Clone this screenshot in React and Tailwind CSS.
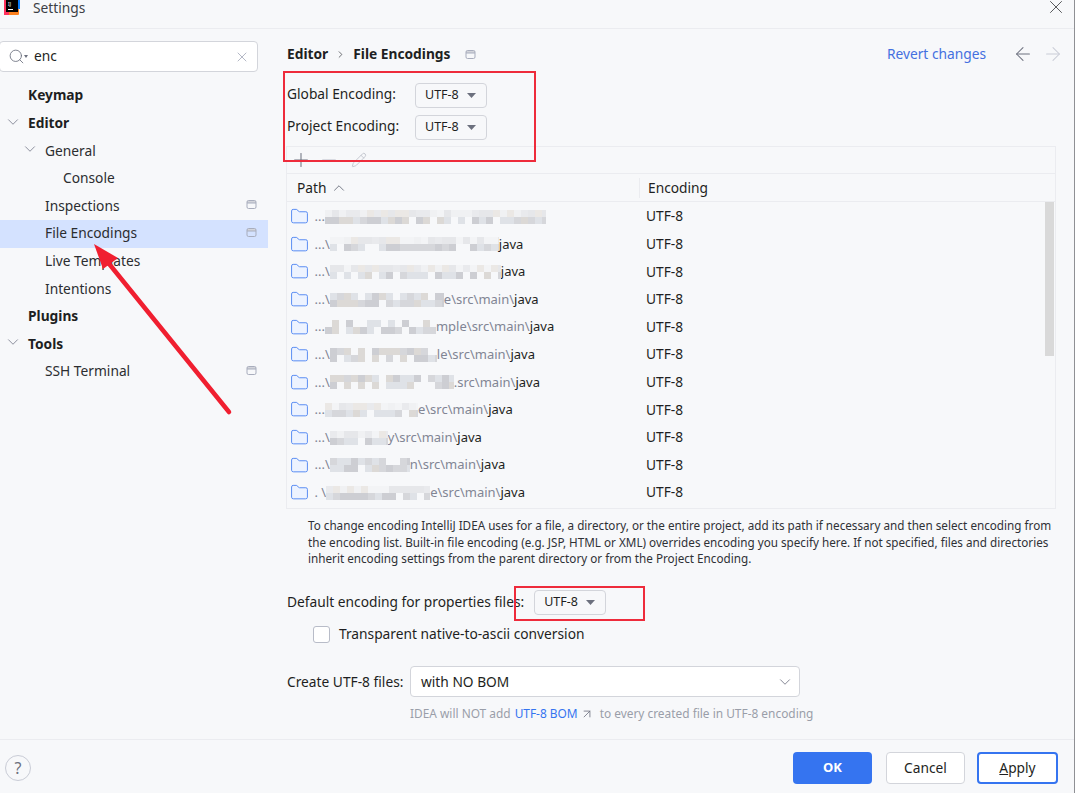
import React from "react";
import { ChevronDown, ChevronRight, ChevronUp, Search, X, Plus, Minus, Pencil, ArrowLeft, ArrowRight, ArrowUpRight, Folder } from "lucide-react";

const font = "font-['Noto_Sans','Liberation_Sans',sans-serif]";

const tree = [
  { label: "Keymap", bold: true, pad: "pl-[28px]" },
  { label: "Editor", bold: true, pad: "pl-[28px]", caret: "left-[3.5px]" },
  { label: "General", pad: "pl-[45px]", caret: "left-[21px]" },
  { label: "Console", pad: "pl-[63px]" },
  { label: "Inspections", pad: "pl-[45px]", tab: true },
  { label: "File Encodings", pad: "pl-[45px]", tab: true, selected: true },
  { label: "Live Templates", pad: "pl-[45px]" },
  { label: "Intentions", pad: "pl-[45px]" },
  { label: "Plugins", bold: true, pad: "pl-[28px]" },
  { label: "Tools", bold: true, pad: "pl-[28px]", caret: "left-[3.5px]" },
  { label: "SSH Terminal", pad: "pl-[45px]", tab: true },
];

const rows = [
  { lead: "...", blur: 221, seed: 3, tail: "" },
  { lead: "...\\", blur: 169, seed: 5, tail: "", end: true },
  { lead: "...\\", blur: 171, seed: 7, tail: "", end: true },
  { lead: "...\\", blur: 114, seed: 2, tail: "e\\src\\main\\", end: true },
  { lead: "...", blur: 111, seed: 4, tail: "mple\\src\\main\\", end: true },
  { lead: "...\\", blur: 107, seed: 6, tail: "le\\src\\main\\", end: true },
  { lead: "...\\", blur: 124, seed: 8, tail: ".src\\main\\", end: true },
  { lead: "...", blur: 93, seed: 9, tail: "e\\src\\main\\", end: true },
  { lead: "...\\", blur: 58, seed: 1, tail: "y\\src\\main\\", end: true },
  { lead: "...\\", blur: 80, seed: 10, tail: "n\\src\\main\\", end: true },
  { lead: ". \\", blur: 104, seed: 11, tail: "e\\src\\main\\", end: true },
];

const shades = ["#e6e7ea", "#d6d7db", "#f0f1f3", "#cdced3", "#ebe8e5", "#dfe2e7", "#f3f4f6", "#dcd9d6", "#e9eaed", "#f7f8fa"];

function TabIcon({ className = "" }) {
  return (
    <svg width="11" height="11" viewBox="0 0 11 11" fill="none" className={className}>
      <path d="M1 4V3a1.5 1.5 0 0 1 1.5-1.5h6A1.5 1.5 0 0 1 10 3v1z" fill="#d3d5db" />
      <rect x="1" y="1.5" width="9" height="8" rx="1.5" stroke="#a8adbd" strokeWidth="1" />
      <path d="M1 4h9" stroke="#a8adbd" strokeWidth="1" />
    </svg>
  );
}

function Mosaic({ width, seed }) {
  const cols = Math.ceil(width / 7);
  const cells = Array.from({ length: cols * 2 }, (_, i) => shades[(((i + 1) * (seed + 3) * 37) ^ (i * 13)) % shades.length]);
  return (
    <span className="inline-grid grid-rows-2 grid-flow-col h-[14px] overflow-hidden blur-[0.6px]" style={{ width }}>
      {cells.map((c, i) => (
        <span key={i} className="block w-[7px] h-[7px]" style={{ background: c }} />
      ))}
    </span>
  );
}

function Combo({ className = "" }) {
  return (
    <div className={`flex items-center w-[72px] h-[25px] bg-[#f7f8fa] border border-[#d3d5db] rounded-[4px] pl-[9px] text-[12.5px] text-[#1e1f22] ${className}`}>
      <span>UTF-8</span>
      <svg width="9" height="5" viewBox="0 0 9 5" className="ml-[8px]">
        <path d="M0 0h9L4.5 5z" fill="#6c707e" />
      </svg>
    </div>
  );
}

export default function App() {
  return (
    <div className={`relative w-[1080px] h-[793px] overflow-hidden bg-[#f7f8fa] flex flex-col text-[13.75px] text-[#1e1f22] ${font}`}>
      {/* title bar */}
      <div className="h-[29px] shrink-0 border-b border-[#ebecf0] flex items-start justify-between pr-[13px]">
        <div className="flex items-start">
          <svg width="20" height="16" viewBox="0 0 20 16">
            <rect x="4" y="0" width="15" height="15" rx="1" fill="#fc801d" />
            <rect x="4" y="0" width="5" height="15" fill="#fe315d" />
            <rect x="16" y="0" width="4" height="9" fill="#087cfa" />
            <rect x="6" y="0" width="12" height="12" fill="#000" />
            <text x="8" y="6" fontSize="5" fill="#fff">IJ</text>
            <rect x="8" y="9" width="5" height="1" fill="#fff" />
          </svg>
          <span className="ml-[13px] mt-[1px] leading-[14px] text-[#3c3f45]">Settings</span>
        </div>
        <X size={22} strokeWidth={0.8} className="-mt-[4.5px] text-[#1e1f22]" />
      </div>

      <div className="flex-1 flex min-h-0">
        {/* sidebar */}
        <aside className="w-[268px] shrink-0 pt-[12px]">
          <div className="ml-[-1px] w-[259px] h-[31px] bg-white border border-[#d3d5db] rounded-[4px] flex items-center pl-[8px] pr-[7px]">
            <Search size={17} strokeWidth={1.2} className="text-[#6c707e]" />
            <svg width="4" height="3" viewBox="0 0 4 3" className="-ml-[1px]"><path d="M0 0h4L2 3z" fill="#6c707e" /></svg>
            <span className="ml-[6px] flex-1">enc</span>
            <X size={16} strokeWidth={1.3} className="text-[#a8adbd]" />
          </div>
          <div className="mt-[10px]">
            {tree.map((t) => (
              <div key={t.label} className={`relative h-[27.6px] flex items-center ${t.pad} ${t.selected ? "bg-[#d4e2ff]" : ""} ${t.bold ? "font-bold" : "text-[#2b2d30]"}`}>
                {t.caret && <ChevronDown size={18} strokeWidth={1.2} className={`absolute ${t.caret} top-[3px] text-[#818594]`} />}
                <span>{t.label}</span>
                {t.tab && <TabIcon className="absolute left-[246px] top-[7px]" />}
              </div>
            ))}
          </div>
        </aside>

        {/* main panel */}
        <main className="flex-1 min-w-0 pl-[19px] pr-[16.5px] relative">
          <div className="h-[50px] flex items-center">
            <span className="font-bold">Editor</span>
            <ChevronRight size={11} strokeWidth={1.6} className="mx-[7px] text-[#3c3f45]" />
            <span className="font-bold">File Encodings</span>
            <TabIcon className="ml-[15px]" />
            <a className="ml-auto text-[#4470e0]">Revert changes</a>
            <ArrowLeft size={22} strokeWidth={1.1} className="ml-[26px] text-[#6c707e]" />
            <ArrowRight size={22} strokeWidth={1.1} className="ml-[7.5px] text-[#c9ccd6]" />
          </div>

          <div className="flex items-center h-[32px]">
            <span className="w-[128px] mb-[1px]">Global Encoding:</span>
            <Combo />
          </div>
          <div className="flex items-center h-[32px]">
            <span className="w-[128px] mb-[1px]">Project Encoding:</span>
            <Combo />
          </div>

          {/* path table */}
          <div className="mt-[3px] -ml-[1px] w-[770px] h-[363px] border border-[#ebecf0] flex flex-col">
            <div className="h-[27px] shrink-0 border-b border-[#ebecf0] flex items-center pl-[3px]">
              <Plus size={22} strokeWidth={1.1} className="text-[#6c707e]" />
              <Minus size={22} strokeWidth={1.1} className="ml-[6px] text-[#b9bcc7]" />
              <Pencil size={16} strokeWidth={1.2} className="ml-[11px] text-[#b9bcc7]" />
            </div>
            <div className="h-[28px] shrink-0 border-b border-[#ebecf0] flex items-center pt-[1px]">
              <div className="w-[353px] flex items-center pl-[10px] border-r border-[#ebecf0]">
                <span>Path</span>
                <ChevronUp size={18} strokeWidth={1.2} className="ml-[3px] text-[#6c707e]" />
              </div>
              <span className="pl-[8px]">Encoding</span>
            </div>
            <div className="relative flex-1 min-h-0 pt-[1px]">
              {rows.map((r) => (
                <div key={r.seed} className="h-[27.6px] flex items-center">
                  <div className="w-[353px] flex items-center pl-[2.5px] text-[13px] whitespace-nowrap">
                    <Folder size={19} strokeWidth={1.25} fill="#edf3ff" className="text-[#588cf3] mr-[6px] shrink-0" />
                    <span className="text-[#818594]">{r.lead}</span>
                    <Mosaic width={r.blur} seed={r.seed} />
                    <span className="text-[#818594]">{r.tail}</span>
                    {r.end && <span className="text-[#1e1f22]">java</span>}
                  </div>
                  <span className="pl-[6px]">UTF-8</span>
                </div>
              ))}
              <div className="absolute right-[1px] top-0 w-[9px] h-[154px] bg-[#d9d9d9]" />
            </div>
          </div>

          <p className="mt-[8px] ml-[21px] w-[752px] text-[11.7px] leading-[16.5px] text-[#2f3136]">
            To change encoding IntelliJ IDEA uses for a file, a directory, or the entire project, add its path if necessary and then select encoding from the encoding list. Built-in file encoding (e.g. JSP, HTML or XML) overrides encoding you specify here. If not specified, files and directories inherit encoding settings from the parent directory or from the Project Encoding.
          </p>

          <div className="mt-[20.5px] flex items-center h-[30px]">
            <span>Default encoding for properties files:</span>
            <Combo className="ml-[10px]" />
          </div>
          <div className="mt-[5px] ml-[26px] flex items-center h-[24px]">
            <span className="w-[17px] h-[17px] bg-white border border-[#b8bcc8] rounded-[3px]" />
            <span className="ml-[9px]">Transparent native-to-ascii conversion</span>
          </div>
          <div className="mt-[20px] flex items-center h-[31px]">
            <span className="w-[123px] pt-[1px]">Create UTF-8 files:</span>
            <div className="w-[390px] h-[31px] pt-[1px] bg-white border border-[#d3d5db] rounded-[4px] flex items-center justify-between pl-[10px] pr-[5px]">
              <span>with NO BOM</span>
              <ChevronDown size={18} strokeWidth={1.1} className="text-[#6c707e]" />
            </div>
          </div>
          <div className="mt-[8px] ml-[123px] flex items-center text-[11.9px] text-[#9a9ea9]">
            <span>IDEA will NOT add</span>
            <span className="ml-[4px] text-[#3574f0]">UTF-8 BOM</span>
            <ArrowUpRight size={14} strokeWidth={1.4} className="ml-[2px] text-[#6c707e]" />
            <span className="ml-[6px]">to every created file in UTF-8 encoding</span>
          </div>
        </main>
      </div>

      {/* footer */}
      <footer className="h-[54px] shrink-0 border-t border-[#ebecf0] flex items-center pl-[5px] pr-[22px]">
        <span className="w-[26px] h-[26px] mt-[2px] rounded-full border border-[#c9ccd6] bg-[#f7f8fa] flex items-center justify-center text-[16px] text-[#6c707e]">?</span>
        <button className="ml-auto w-[79px] h-[32px] mt-[2px] pt-[1px] rounded-[4px] bg-[#3574f0] text-white font-bold text-[13px]">OK</button>
        <button className="ml-[14px] w-[79px] h-[32px] mt-[2px] pt-[1px] rounded-[4px] bg-white border border-[#d3d5db]">Cancel</button>
        <button className="ml-[12px] w-[81px] h-[32px] mt-[2px] pt-[1px] rounded-[4px] bg-white border-2 border-[#3574f0]"><span className="underline">A</span>pply</button>
      </footer>

      {/* window edge */}
      <div className="absolute top-0 bottom-0 left-[1074px] w-[1px] bg-[#8f9094]" />
      <div className="absolute top-0 bottom-0 left-[1075px] right-0 bg-white" />

      {/* annotations drawn over the screenshot */}
      <div className="absolute left-[283px] top-[71px] w-[253px] h-[91px] border-2 border-[#ee2b3b]" />
      <div className="absolute left-[514px] top-[586px] w-[131px] h-[35px] border-2 border-[#ee2b3b]" />
      <svg className="absolute left-0 top-0 pointer-events-none" width="1080" height="793">
        <path d="M229 412L106 260" stroke="#f01f30" strokeWidth="4.5" strokeLinecap="round" />
        <path d="M94 244L118 258L103 269z" fill="#f01f30" />
      </svg>
    </div>
  );
}
